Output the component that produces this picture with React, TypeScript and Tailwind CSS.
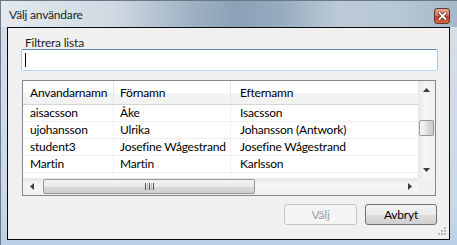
import React from "react";

const font = { fontFamily: 'Lato, "Noto Sans", sans-serif' };

const rows = [
    ["aisacsson", "Åke", "Isacsson"],
    ["ujohansson", "Ulrika", "Johansson (Antwork)"],
    ["student3", "Josefine Wågestrand", "Josefine Wågestrand"],
    ["Martin", "Martin", "Karlsson"],
];

function Arrow({ dir }: { dir: "up" | "down" | "left" | "right" }) {
    const pts = {
        up: "0,4 3.5,0 7,4",
        down: "0,0 3.5,4 7,0",
        left: "4,0 0,3.5 4,7",
        right: "0,0 4,3.5 0,7",
    }[dir];
    const vertical = dir === "up" || dir === "down";
    return (
        <svg width={vertical ? 7 : 4} height={vertical ? 4 : 7} viewBox={vertical ? "0 0 7 4" : "0 0 4 7"}>
            <polygon points={pts} fill="#3c3c3c" />
        </svg>
    );
}

function CloseButton() {
    return (
        <div className="flex h-[16px] w-[16px] items-center justify-center rounded-[3px] border border-[#5d3a33] bg-[linear-gradient(to_bottom,#eba48d_0%,#d9705a_45%,#c4391f_55%,#d86444_100%)]">
            <svg width="9" height="8" viewBox="0 0 9 8">
                <path d="M1.5 1 L7.5 7 M7.5 1 L1.5 7" stroke="#5b2a20" strokeWidth="3.4" strokeLinecap="square" />
                <path d="M1.5 1 L7.5 7 M7.5 1 L1.5 7" stroke="#ffffff" strokeWidth="1.8" strokeLinecap="square" />
            </svg>
        </div>
    );
}

function UserTable() {
    return (
        <div className="ml-[1px] flex h-[116px] w-[414px] flex-col border border-[#828790] bg-white">
            <div className="flex h-[97px]">
                {/* Columns */}
                <div className="flex flex-1 flex-col overflow-hidden whitespace-nowrap text-[12px] tracking-[-0.2px] text-black">
                    <div className="flex h-[24px] shrink-0 border-b border-[#d5d5d5] bg-[linear-gradient(to_bottom,#ffffff_0%,#ffffff_50%,#f3f4f6_51%,#f1f2f4_100%)]">
                        <div className="flex w-[91px] items-center overflow-hidden border-r border-[#e5e5e5] pl-[7px]">Anvandarnamn</div>
                        <div className="flex w-[117px] items-center overflow-hidden border-r border-[#e5e5e5] pl-[6px]">Förnamn</div>
                        <div className="flex flex-1 items-center pl-[9px]">Efternamn</div>
                    </div>
                    {rows.concat([["", "", ""]]).map((r, i) => (
                        <div key={i} className="flex h-[17px] shrink-0 border-b border-[#f0f0f0]">
                            <div className="flex w-[91px] items-center overflow-hidden border-r border-[#f0f0f0] pl-[7px]">{r[0]}</div>
                            <div className="flex w-[117px] items-center overflow-hidden border-r border-[#f0f0f0] pl-[6px]">{r[1]}</div>
                            <div className="flex flex-1 items-center pl-[9px]">{r[2]}</div>
                        </div>
                    ))}
                </div>

                {/* Vertical scrollbar */}
                <div className="flex w-[17px] flex-col bg-[linear-gradient(to_right,#e8e8e8,#f5f5f5_40%,#f0f0f0)]">
                    <div className="flex h-[17px] items-center justify-center pt-[1px]">
                        <Arrow dir="up" />
                    </div>
                    <div className="flex-1 pt-[22px]">
                        <div className="mx-auto h-[16px] w-[15px] rounded-[2px] border border-[#979797] bg-[linear-gradient(to_right,#f4f4f4,#e8e8e8_50%,#d9d9d9_51%,#cfcfcf)]" />
                    </div>
                    <div className="flex h-[17px] items-center justify-center">
                        <Arrow dir="down" />
                    </div>
                </div>
            </div>

            {/* Horizontal scrollbar */}
            <div className="flex h-[17px]">
                <div className="flex flex-1 bg-[linear-gradient(to_bottom,#e8e8e8,#f5f5f5_40%,#f0f0f0)]">
                    <div className="flex w-[17px] items-center justify-center">
                        <Arrow dir="left" />
                    </div>
                    <div className="flex flex-1 items-center pl-[3px]">
                        <div className="flex h-[15px] w-[212px] items-center justify-center gap-[1px] rounded-[2px] border border-[#979797] bg-[linear-gradient(to_bottom,#f4f4f4,#e8e8e8_50%,#d9d9d9_51%,#cfcfcf)]">
                            <div className="h-[7px] w-[1px] bg-[#555]" />
                            <div className="h-[7px] w-[1px] bg-[#bbb]" />
                            <div className="h-[7px] w-[1px] bg-[#555]" />
                            <div className="h-[7px] w-[1px] bg-[#bbb]" />
                            <div className="h-[7px] w-[1px] bg-[#555]" />
                        </div>
                    </div>
                    <div className="flex w-[17px] items-center justify-center">
                        <Arrow dir="right" />
                    </div>
                </div>
                <div className="w-[17px] bg-[#f0f0f0]" />
            </div>
        </div>
    );
}

export default function App() {
    return (
        <div
            style={font}
            className="flex h-[245px] w-[457px] flex-col overflow-hidden border-l border-t border-[#6b7887] bg-[linear-gradient(to_bottom,#d5dfe9,#c9d8e7_85%,#b9d0e6)] tracking-[-0.2px]"
        >
            {/* Title bar */}
            <div className="flex h-[26px] shrink-0 items-center bg-[linear-gradient(to_right,#e3e9ef_0%,#cfd9e2_25%,#9eb1c3_42%,#8ba1b6_52%,#98adc0_62%,#bccad7_74%,#b7c6d3_88%,#a5b8c9_100%)] pl-[8px] pr-[7px]">
                <span className="flex-1 pt-[2px] text-[12px] text-[#1e1e1e]">Välj användare</span>
                <div className="pt-[4px]">
                    <CloseButton />
                </div>
            </div>

            {/* Client area */}
            <div className="relative ml-[6px] mr-[7px] flex h-[213px] shrink-0 flex-col border border-[#0a0a0a] bg-[#f0f0f0] pl-[13px] pr-[11px]">
                <div className="h-[21px] pl-[4px] pt-[8px] text-[12px] leading-[14px] text-[#1e1e1e]">Filtrera lista</div>
                <div className="flex h-[22px] items-center rounded-[2px] border border-[#a4c9e3] border-t-[#5a88b1] border-b-[#b7d9ed] bg-white pl-[3px]">
                    <div className="h-[14px] w-[1px] bg-black" />
                </div>
                <div className="mt-[9px]">
                    <UserTable />
                </div>
                <div className="mt-[8px] flex justify-end gap-[8px] pr-[1px] text-[12px]">
                    <div className="flex h-[21px] w-[73px] items-center justify-center rounded-[3px] border border-[#c2c5c8] bg-[#f4f4f4] text-[#a0a0a0]">
                        Välj
                    </div>
                    <div className="flex h-[21px] w-[72px] items-center justify-center rounded-[3px] border border-[#707070] bg-[linear-gradient(to_bottom,#f2f2f2_0%,#ebebeb_50%,#dddddd_51%,#cfcfcf_100%)] text-black">
                        Avbryt
                    </div>
                </div>
                {/* Resize grip */}
                <svg className="absolute bottom-[4px] right-[3px]" width="8" height="8" viewBox="0 0 8 8">
                    {[
                        [6, 0],
                        [6, 3],
                        [3, 3],
                        [6, 6],
                        [3, 6],
                        [0, 6],
                    ].map(([x, y], i) => (
                        <rect key={i} x={x} y={y} width="2" height="2" fill="#b8b8b8" />
                    ))}
                </svg>
            </div>
        </div>
    );
}
